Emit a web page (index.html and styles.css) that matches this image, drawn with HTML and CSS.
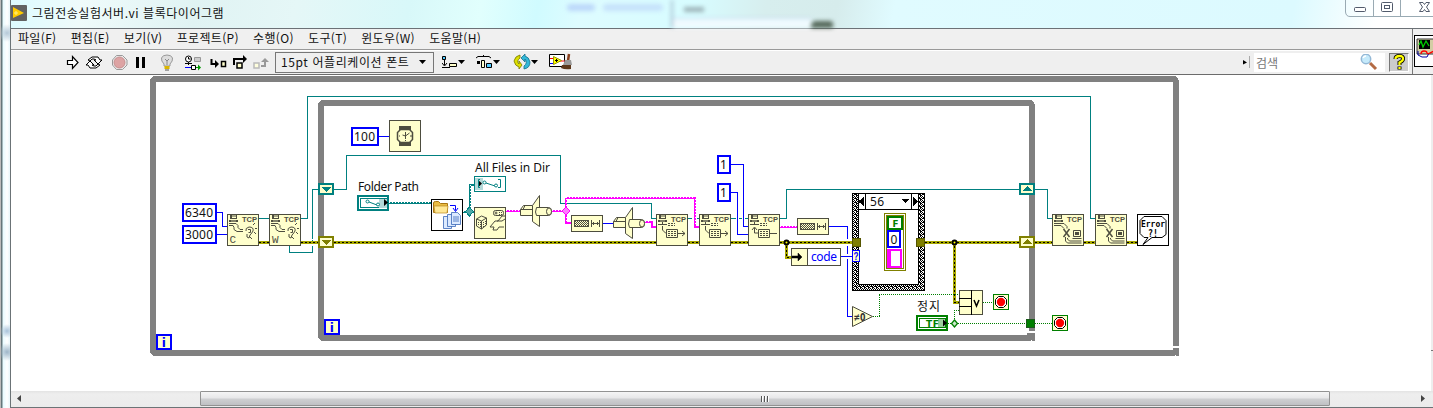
FILE: index.html
```html
<!DOCTYPE html>
<html lang="ko">
<head>
<meta charset="utf-8">
<title>그림전송실험서버.vi 블록다이어그램</title>
<link rel="stylesheet" href="styles.css">
</head>
<body>
<div class="window">
  <div class="frame-left"></div>
  <div class="main">
    <header class="titlebar">
      <svg class="app-icon" width="16" height="16" viewBox="0 0 16 16"><rect width="16" height="16" rx="1" fill="#626262"/><path d="M2 2L13 8L2 13Z" fill="#fc0"/><path d="M5 6v4M3 8h4" stroke="#fff080"/></svg>
      <h1 class="title">그림전송실험서버.vi 블록다이어그램</h1>
      <div class="ghost"><i class="smudge"></i><i class="smudge wide"></i><div class="ghost-panel"><i class="ghost-text"></i><i class="ghost-field"></i></div><i class="ghost-dot"></i></div>
      <div class="controls">
        <svg width="88" height="17" viewBox="1345 0 88 17"><path d="M1345.500 0V12Q1346 16.500 1350 16.500H1433M1373.500 0V16M1400.500 0V16" fill="none" stroke="#99aab3"/><g fill="#fff" stroke="#525b6c"><rect x="1354.500" y="7.500" width="11" height="4" rx="1"/><rect x="1381.500" y="2.500" width="11" height="9" rx="1"/><rect x="1384.500" y="5.500" width="5" height="3"/><path d="M1419.500 2.500h3.500l1.500 2 1.500-2h3.500l-3 4.500 3 4.500h-3.500l-1.500-2-1.500 2h-3.500l3-4.500z"/></g></svg>
      </div>
    </header>
    <div class="bars">
      <div class="bars-main">
        <nav class="menubar"><span>파일(F)</span><span>편집(E)</span><span>보기(V)</span><span>프로젝트(P)</span><span>수행(O)</span><span>도구(T)</span><span>윈도우(W)</span><span>도움말(H)</span></nav>
        <div class="toolbar">
          <div class="run-tools">
            <svg width="16" height="23" viewBox="65 51 16 23"><path d="M67.500 60.500h5v-4l5.500 6-5.500 6v-4h-5z" fill="#fff" stroke="#000" stroke-width="1.200"/></svg>
            <svg width="18" height="23" viewBox="85 51 18 23"><path d="M88 60l4-3h6l2 3h2l-4 4-4-4h2l-2-1h-2l-2 2zM100 65l-4 3h-6l-2-3h-2l4-4 4 4h-2l2 1h2l2-2z" fill="#fff" stroke="#000"/></svg>
            <svg width="18" height="23" viewBox="111 51 18 23"><path d="M116.500 55.500h6l4.500 4.500v5l-4.500 4.500h-6l-4-4.500v-5z" fill="#eee" stroke="#999"/><circle cx="119.500" cy="62.500" r="5.500" fill="#dda3a3" stroke="#c48e8e"/></svg>
            <svg width="14" height="23" viewBox="134 51 14 23"><path d="M136 57h3v11h-3zM142 57h3v11h-3z"/></svg>
            <svg width="16" height="23" viewBox="159 51 16 23"><path d="M164 64q-3-3-2.500-6 1-3 5.500-3t5.500 3q.5 3-2.500 6v2h-6z" fill="#ddd" stroke="#999"/><path d="M165 59l2 2 2-2M167 61v4" fill="none" stroke="#888"/><path d="M164.500 66h5v3h-5z" fill="#dbb600"/><path d="M165 70h4" stroke="#555"/></svg>
            <svg width="20" height="23" viewBox="183 51 20 23"><circle cx="188.500" cy="59" r="3" fill="#fff" stroke="#000"/><path d="M188.500 57v2h2M188.500 62v3M185 63.500h7" fill="none" stroke="#000"/><path d="M194.500 57.500h6v4h-6z" fill="#ccc" stroke="#999"/><path d="M185 67.500h6" stroke="#00f"/><path d="M191.500 65.500h4v4h-4z" fill="#fff" stroke="#000"/><path d="M196 67.500h2" stroke="#090"/><path d="M198 64.500l3 3-3 3z" fill="#090"/></svg>
            <svg width="20" height="23" viewBox="209 51 20 23"><path d="M211.500 59v5h5" fill="none" stroke="#000" stroke-width="2"/><path d="M215 60l4 4-4 4z"/><path d="M221.500 61.500h4v5h-4z" fill="#ffc" stroke="#000" stroke-width="1.500"/></svg>
            <svg width="18" height="23" viewBox="231 51 18 23"><path d="M234 65v-6h9" fill="none" stroke="#000" stroke-width="2"/><path d="M243 55l4 4-4 4z"/><path d="M237 63h5v5h-5z" fill="#ffc" stroke="#000" stroke-width="1.500"/></svg>
            <svg width="18" height="23" viewBox="252 51 18 23"><path d="M254 63h5v5h-5z" fill="#ffd" stroke="#bbb" stroke-width="1.500"/><path d="M261 66h4v-5" fill="none" stroke="#999" stroke-width="2"/><path d="M261 62l4-4 4 4z" fill="#999"/></svg>
          </div>
          <div class="font-combo"><span>15pt 어플리케이션 폰트</span><svg width="7" height="5" viewBox="0 0 7 5"><path d="M0 0h7L3.500 4z"/></svg></div>
          <div class="arrange-tools">
            <svg width="24" height="23" viewBox="442 51 24 23"><path d="M442.500 56.500h3v3h-3z" fill="#5cf" stroke="#000"/><path d="M444.500 60v5M442 63l2.500 3 2.500-3M442 67.500h8" fill="none" stroke="#000"/><path d="M449.500 63.500h7v3h-7z" fill="#ffc" stroke="#000"/><path d="M458 60h7l-3.500 4z"/></svg>
            <svg width="26" height="23" viewBox="476 51 26 23"><path d="M477 58l2-1.500h11l2 1.500M484.500 56v-1" fill="none" stroke="#000"/><path d="M478 61h3v3h-3z"/><path d="M482.500 60.500h3v7h-3z" fill="#ffc" stroke="#000"/><path d="M487.500 63.500h5v4h-5z" fill="#5cf" stroke="#000"/><path d="M494 60h7l-3.500 4z"/></svg>
            <svg width="28" height="23" viewBox="511 51 28 23"><path d="M521 55q-5 1-6 6 1 5 5 6v2l3-4-3-4v3q-3-3 1-6z" fill="#dde000" stroke="#777700" stroke-width=".8"/><path d="M525 69q6-1 6-7-1-5-5-6v-2l-4 4 4 4v-3q3 4-1 7z" fill="#32b8d8" stroke="#176e8b" stroke-width=".8"/><path d="M532 60h7l-3.500 4z"/></svg>
            <svg width="26" height="23" viewBox="547 51 26 23"><path d="M549.500 54.500h15v12h-15z" fill="#fff" stroke="#000"/><path d="M550 58.500h4M560 61h5" stroke="red"/><path d="M550 63.500h4" stroke="#00f"/><path d="M553.500 56.500l8 4-8 4z" fill="#ff0" stroke="#990"/><path d="M556.500 59v3M555 60.500h3" stroke="#000"/><path d="M569 54l-1 7" stroke="#873e1c" stroke-width="2.500"/><path d="M565 60h6l1 5h-9z" fill="#999"/><path d="M562 65h9v4q-6 1-10-1z" fill="#5c381b"/></svg>
          </div>
          <div class="search-tools">
            <svg class="expander" width="8" height="13" viewBox="1243 56 8 13"><path d="M1243 60l4 2.500-4 2z"/><path d="M1249.500 56v12" stroke="#aaa"/></svg>
            <div class="search"><span>검색</span><svg width="18" height="17" viewBox="1360 54 18 17"><path d="M1370 63l6 6" stroke="#b36b45" stroke-width="3"/><circle cx="1366" cy="59" r="4.700" fill="#c5eafb" stroke="#94b8d6" stroke-width="1.500"/><path d="M1363 58q1-2 3-2" fill="none" stroke="#fff" stroke-width="1.500"/></svg></div>
            <div class="help"><svg width="18" height="17" viewBox="0 0 18 17"><path d="M5.500 5q0-3 4-3t3.500 3q0 2-3.500 3.500V11M9.500 12.500v3" fill="none" stroke="#000" stroke-width="4"/><path d="M5.500 5q0-3 4-3t3.500 3q0 2-3.500 3.500V11M9.500 13v2" fill="none" stroke="#ff0" stroke-width="2.300"/></svg></div>
          </div>
        </div>
      </div>
      <div class="vi-icon"><svg width="20" height="33" viewBox="0 0 20 33"><rect x=".5" y=".5" width="32" height="31" fill="#fff" stroke="#000"/><path d="M3 4h17v15H3z" fill="#d3cda5" stroke="#333"/><path d="M5 5h11v9H5z"/><path d="M5 10l2-4 2 6 3-6 3 5" fill="none" stroke="#0c0" stroke-width="1.300"/><path d="M4 16v4l4 2h5l2-4" fill="none" stroke="#00a"/><path d="M7 19q0-3 3-3t3 2 7-2" fill="none" stroke="red" stroke-width="1.300"/></svg></div>
    </div>
    <div class="workspace">
      <svg class="diagram" width="1420" height="316" viewBox="11 75 1420 316">
        <defs>
          <pattern id="checker" width="4" height="4" patternUnits="userSpaceOnUse"><rect width="4" height="4" fill="#fff"/><path d="M0 0h1v1h-1zM2 0h1v1h-1zM1 1h1v1h-1zM3 1h1v1h-1zM0 2h1v1h-1zM2 2h2v1h-2zM0 3h2v1h-2z"/></pattern>
          <pattern id="weave" width="2" height="2" patternUnits="userSpaceOnUse"><rect width="2" height="2" fill="#ffc"/><path d="M0 0h1v1h-1zM1 1h1v1h-1z" fill="#4d4d3f"/></pattern>
          <g id="base"><rect x=".5" y=".5" width="31" height="31" fill="#ffc" stroke="#4d4d3f"/></g>
          <g id="tcp"><use href="#base"/><path d="M3 1h2v3h4V1h1v4h-7zM5 1.500h4v1h-4zM2 6h9v2h-9z" fill="#4d4d3f"/><path d="M4 7h5" stroke="#ffc" stroke-width=".6"/><text class="tiny" x="15" y="7.500" textLength="15" lengthAdjust="spacingAndGlyphs">TCP</text></g>
          <g id="listen"><use href="#tcp"/><path d="M2 9.500h7l2 2v2l2 2h3M2 11.500h4l1 2v2l3 2h6M19 17q-1-3 3-4 5 0 4 4-1 2-3 4l-1 3-2-1v-3M21 15.500h2.500v3h-2M26 11l2-2M28 14.500h2M27 18l2 2M23 23l2 2" fill="none" stroke="#4d4d3f"/></g>
          <g id="send"><use href="#tcp"/><path d="M6.500 8v2M2 10.500h9M6.500 12v4l3 3h1M22 19.500h7M26 17l3 2.500-3 2.500" fill="none" stroke="#4d4d3f"/><path d="M12 9.500h7M12 11.500h7" stroke="#4d4d3f" stroke-dasharray="2 1"/><path d="M10.500 15.500h11v8h-11z" fill="#ffc" stroke="#4d4d3f"/><path d="M12 17.500h8M12 19.500h8M12 21.500h8" stroke="#4d4d3f" stroke-dasharray="2 1"/></g>
          <g id="recv"><use href="#tcp"/><path d="M6.500 8v2M2 10.500h9M6.500 14v5h4M4 16l2.500-3 2.500 3M22 19.500h7" fill="none" stroke="#4d4d3f"/><path d="M12 9.500h7M12 11.500h7" stroke="#4d4d3f" stroke-dasharray="2 1"/><path d="M10.500 15.500h11v8h-11z" fill="#ffc" stroke="#4d4d3f"/><path d="M12 17.500h8M12 19.500h8M12 21.500h8" stroke="#4d4d3f" stroke-dasharray="2 1"/></g>
          <g id="close"><use href="#tcp"/><path d="M2 9.500h10l3 3v2M2 11.500h7l3 3M13.500 23v4l2 2h14M15.500 24v1l2 2h12M21.500 16.500h7v6h-7zM20.500 24.500h9" fill="none" stroke="#4d4d3f"/><path d="M23 18h4v3h-4z" fill="#4d4d3f"/><path d="M11.500 15l6 8M17.500 15l-6 8" stroke="#4d4d3f" stroke-width="1.500"/></g>
          <g id="length"><rect x=".5" y=".5" width="31" height="16" fill="#ffc" stroke="#4d4d3f"/><rect x="3.500" y="5.500" width="14" height="6" fill="url(#weave)" stroke="#4d4d3f"/><path d="M20.500 5v7M28.500 5v7M21 8.500h7M22.500 7v3M26.500 7v3" stroke="#4d4d3f" fill="none"/></g>
          <g id="concat" fill="#ffc" stroke="#4d4d3f"><path d="M.5 14.500l3-4h9v10H.5z"/><path d="M.5 14.500h12M5 10.500l-2 4"/><path d="M12.500 10.500L19.500.5v31l-7-5z"/><path d="M16.500 12.500h12q3 0 3 4t-3 4h-12q-2-3 0-8z"/><ellipse cx="29" cy="16.500" rx="2.500" ry="3.500"/></g>
          <g id="iter"><rect x="1" y="1" width="14" height="14" fill="#ffc" stroke="#00f" stroke-width="2"/><text class="iter-i" x="5.800" y="13">i</text></g>
          <g id="stop"><rect x=".5" y=".5" width="15" height="15" fill="#ffc" stroke="#007f00"/><path d="M5.500 2.500h5l3 3v5l-3 3h-5l-3-3v-5z" fill="#fff" stroke="#000"/><circle cx="8" cy="8" r="4.200" fill="red"/></g>
        </defs>

        <g class="crisp">
          <path d="M150 81l1-3 3-2H1175l3 2 1 3V346h-6V82H156V350H1173v-2h6v8h-3v-1h-1v1H154l-3-2-1-3z" fill="gray"/>
          <path d="M318 105l1-3 3-2H1031l3 2 1 3V331h-6V106H324V335H1027v-2h8v8h-3v-1h-1v1H322l-3-2-1-3z" fill="gray"/>
        </g>

        <g class="wire teal">
          <path d="M259 218.500h10M301 218.500h6.500V96.500H1090.500V218.500h4.500M289.500 245v7.500h23V189.500h6M334 189.500h12.500V155.500h214v48h91v15h5M688 218.500h4M697 218.500h2M731 218.500h5M739 218.500h3M745 218.500h3M780 218.500h6.500v-29H1019M1035 189.500h12.500v29h4.500"/>
        </g>
        <g class="crisp"><path d="M309 239h7v1h-7zM309 244h7v2h-7z" fill="#fff"/></g>
        <g class="wire blue">
          <path d="M217 212.500h5.500v14h4.500M217 234.500h10M379 136.500h10M603 223.500h10M731 164.500h12.500v62h4.500M731 192.500h6.500v42h10.500M829 226.500h18.500V239M847.500 246v8M847.500 259v57.500h5M841 256.500h12"/>
        </g>
        <g class="path-wire">
          <path d="M389 203h42M463 212h11M470 212V184M469 185h5"/>
          <path class="path-gap" d="M389 202.500h42M463 211.500h5M470.500 207V184"/>
          <path class="path-joint" d="M469.500 207l4 4.500-4 4.500-4-4.500z"/>
        </g>
        <g class="string-wire">
          <path d="M506 211h14M552 211h14M566 198h129v29h4M566 198v25h5M645 222h7v5h4M780 227h17"/>
          <path class="string-gap" d="M506 210.500h14M552 210.500h14M566 197.500h128M695.500 199v26M566.500 199v23M645 221.500h5M780 226.500h17"/>
          <path class="string-joint" d="M566 207l4 4-4 4-4-4z"/>
        </g>
        <g class="error-wire"><path id="error-path" d="M259 242.500h10M301 242.500h17M334 242.500h322M688 242.500h11M731 242.500h17M780 242.500h72M786.500 242v15.500h5M906 242.500h10M925 242.500h94M954.500 242v60.500h5M1035 242.500h17M1084 242.500h11M1127 242.500h10"/></g>
        <use class="error-dash" href="#error-path"/>
        <g fill="#ff0" stroke="#000" stroke-width="2"><circle cx="786.500" cy="242.500" r="2"/><circle cx="954.500" cy="242.500" r="2"/></g>
        <g class="bool-wire"><path d="M873 316.500h6.500M879.500 316v-22M879 294.500H959M948 323.500h78M954.500 323v-13M954 310.500h5M983 302.500h10M1035 323.500h17"/></g>
        <path d="M954.500 320l3 3.500-3 3.500-3-3.500z" fill="#cfe8cf" stroke="#007f00" stroke-width="1.300"/>

        <g class="crisp" fill="#fff" stroke="#00f" stroke-width="2"><rect x="183" y="204" width="33" height="17"/><rect x="183" y="226" width="33" height="17"/><rect x="352" y="128" width="26" height="17"/><rect x="718" y="156" width="12" height="17"/><rect x="718" y="184" width="12" height="17"/></g>
        <g class="label"><text x="185" y="217" textLength="28">6340</text><text x="185" y="239" textLength="28">3000</text><text x="354" y="141" textLength="21">100</text><text x="720" y="169">1</text><text x="720" y="197">1</text><text x="358" y="191" textLength="61">Folder Path</text><text x="475" y="172" textLength="75">All Files in Dir</text><text x="917" y="311" textLength="23">정지</text></g>

        <g class="crisp">
          <g fill="#ffc" stroke-width="2"><g stroke="#008080"><rect x="319" y="184" width="14" height="10"/><rect x="1020" y="184" width="14" height="10"/></g><g stroke="#808000"><rect x="319" y="237" width="14" height="10"/><rect x="1020" y="237" width="14" height="10"/></g></g>
          <path d="M321 187h10l-5 5zM1022 191h10l-5-5z" fill="#008080"/><path d="M321 240h10l-5 5zM1022 244h10l-5-5z" fill="#808000"/>
        </g>

        <use href="#listen" x="227" y="214"/><use href="#listen" x="269" y="214"/><text class="tiny big" x="229.500" y="243">C</text><text class="tiny big" x="272" y="243">W</text>
        <use href="#send" x="656" y="214"/><use href="#send" x="699" y="214"/><use href="#recv" x="748" y="214"/>
        <use href="#close" x="1052" y="214"/><use href="#close" x="1095" y="214"/>
        <use href="#length" x="571" y="215"/><use href="#length" x="797" y="218"/>
        <use href="#concat" x="520" y="195"/><use href="#concat" x="613" y="207"/>

        <use href="#base" x="389" y="120"/>
        <path d="M399 126h12v4h-12zM399 142h12v4h-12z" fill="#4d4d3f"/><path d="M400.500 129.500h9l3 3v7l-3 3h-9l-3-3v-7z" fill="#ffc" stroke="#4d4d3f" stroke-width="1.500"/><path d="M405.500 132v7M405.500 136l4-3M405.500 136l-3-1M399 136h1M410 136h3M405.500 140v1" stroke="#4d4d3f" fill="none"/>

        <g class="crisp" fill="#fff" stroke="#008080"><rect x="358" y="196" width="30" height="14" stroke-width="2"/><rect x="360.500" y="198.500" width="26" height="9"/><rect x="474.500" y="176.500" width="31" height="15"/></g>
        <path d="M379 199h8v9h-8zM475 178h8v12h-8z" fill="#b4d9d9"/><path d="M384 199l4 3.500-4 3.500zM478 180l4 3.500-4 4z"/>
        <g fill="#fff" stroke="#008080"><path d="M369 202l8 3M486 183l9 3M480 179.500h-1.500v8h1.500M498 179.500h2.500v8h-2.500" fill="none"/><circle cx="367.500" cy="201.500" r="1.500"/><circle cx="378" cy="204.500" r="1.500"/><circle cx="484.500" cy="182.500" r="1.500"/><circle cx="496" cy="185.500" r="1.500"/></g>

        <rect x="431.500" y="199.500" width="31" height="31" fill="#fff" stroke="#000"/>
        <path d="M433.500 203q0-1.500 2-1.500h3l2 2h7v9h-14z" fill="#e9bb42" stroke="#a87512"/><path d="M434 206h14l-1 7h-12z" fill="#ffe895" stroke="#b9861c" stroke-width=".7"/>
        <path d="M450 205.500h5.500v5M453 208l2.500 3.500 2.500-3.500" fill="none" stroke="#00f"/>
        <g fill="#dceaff" stroke="#3867b8" stroke-width=".8"><path d="M443.500 216.500h8v12h-8z"/><path d="M447.500 214.500h8v12h-8z"/><path d="M451.500 212.500h6l3 3v9h-9z"/><path d="M453 217h6M453 219h6M453 221h6"/></g>

        <use href="#base" x="474" y="207"/>
        <g fill="none" stroke="#4d4d3f"><rect x="493.500" y="210.500" width="10" height="5" rx="2"/><circle cx="496" cy="213" r="1"/><path d="M499 212.500h4M499 214.500h4" stroke-dasharray="1 1"/><path d="M476.500 219l5-3 5 2v7l-5 4-5-3zM476.500 219l5 2 5-3M481.500 221v8M505 216h-3l-4 5h-3l-5 6h4l-1 3h4l2-3h5M497 221l5 0 3-2"/><path d="M483.500 222v5M485.500 221v5M478.500 222v4M480.500 222v5" stroke-dasharray="1 1"/></g>

        <g class="crisp"><rect x="791.500" y="248.500" width="49" height="17" fill="#fff" stroke="#4d4d3f"/><path d="M792 249h15v16h-15z" fill="#ffc"/><path d="M807.500 248v18" stroke="#4d4d3f"/></g><path d="M792 256h6v-3l4 4-4 4v-3h-6z" stroke="#000" stroke-width=".5"/><text class="label code" x="811" y="261" textLength="26">code</text>

        <g class="crisp"><rect x="852.500" y="193.500" width="72" height="97" fill="url(#checker)" stroke="#000"/><rect x="858.500" y="193.500" width="60" height="91" fill="#fff" stroke="#000"/><path d="M858 209.500h61M865.500 194v15M911.500 194v15M852 193.500h73" stroke="#000"/><path d="M864 197v9l-6-4.500zM913 197v9l5-4.500zM901 199h8l-4 4z"/></g>
        <text class="label" x="870" y="206" textLength="14">56</text>
        <g class="crisp" fill="#fff"><rect x="884.500" y="213.500" width="21" height="57" stroke="#808000"/><rect x="886.500" y="215.500" width="17" height="53" stroke="#808000"/><rect x="888" y="217" width="14" height="12" stroke="#007f00" stroke-width="2"/><rect x="888" y="231" width="12" height="16" stroke="#00f" stroke-width="2"/><path d="M887 249h15v19h-15z" fill="#f0f"/><path d="M891 251h9v15h-9z"/></g>
        <text class="green-glyph" x="892.500" y="226.500" textLength="6" lengthAdjust="spacingAndGlyphs">F</text><text class="label" x="890.500" y="244">0</text>
        <g class="crisp" fill="#808000" stroke="#555500"><rect x="852.500" y="238.500" width="8" height="8"/><rect x="916.500" y="238.500" width="8" height="8"/></g>
        <rect class="crisp" x="852.500" y="250.500" width="7" height="11" fill="#ffc" stroke="#00f"/><text class="question" x="853.500" y="260" textLength="5" lengthAdjust="spacingAndGlyphs">?</text>
        <path d="M852.500 306.500v20l20-10z" fill="#ffc" stroke="#4d4d3f"/><text class="not-zero" x="853.500" y="320.500" textLength="12" lengthAdjust="spacingAndGlyphs">≠0</text>

        <g class="crisp" fill="#fff" stroke="#007f00"><rect x="917" y="316" width="30" height="14" stroke-width="2"/><rect x="919.500" y="318.500" width="26" height="9"/></g><path d="M938 319h7v8h-7z" fill="#9cce9c"/><text class="green-glyph" x="926" y="326.500" textLength="13">TF</text><path d="M943 319.500l4 3.500-4 3.500z"/>
        <g class="crisp" fill="#ffc" stroke="#4d4d3f"><rect x="959.500" y="290.500" width="23" height="24"/><path d="M971.500 290v25M959 298.500h12M959 306.500h12" stroke="#000"/></g><path d="M974 300l2.500 6 2.500-6" fill="none" stroke="#000" stroke-width="1.500"/>
        <use href="#stop" x="993" y="294"/><use href="#stop" x="1052" y="315"/>
        <rect class="crisp" x="1026.500" y="319.500" width="8" height="8" fill="#008000" stroke="#1b5a1b"/>
        <use href="#iter" x="156" y="334"/><use href="#iter" x="324" y="319"/>

        <rect x="1137.500" y="214.500" width="31" height="31" fill="#fff" stroke="#000"/><path d="M1144 216.500h18l4 4v14l-4 3h-10l-9 7 5-7h-4l-4-4v-13z" fill="#fff" stroke="#000"/><text class="error-text" x="1141" y="227" textLength="24" lengthAdjust="spacingAndGlyphs">Error</text><text class="error-text marks" x="1148" y="236.500" textLength="10" lengthAdjust="spacingAndGlyphs">?!</text>
      </svg>
      <div class="vscroll"></div>
    </div>
    <div class="hscroll">
      <svg width="17" height="16" viewBox="0 0 17 16"><path d="M10 4v7L6 7.500z" fill="#444"/></svg>
      <div class="thumb"><i></i><i></i><i></i></div>
      <svg width="17" height="16" viewBox="0 0 17 16"><path d="M6 4v7l4-3.500z" fill="#444"/></svg>
    </div>
  </div>
</div>
</body>
</html>
```
FILE: styles.css
```css
* { box-sizing: border-box; }
body { margin: 0; overflow: hidden; font: 12px/16px "Noto Sans CJK KR", "Noto Sans", sans-serif; color: #111; }
svg { display: block; flex: none; }
.window { display: flex; width: 1433px; height: 408px; background: #f0f0f0; }
.frame-left { width: 11px; flex: none; border-left: 1px solid #bbb; border-right: 1px solid #6b7376; background: radial-gradient(circle at 6px 33px, #b5c9d8 0, #b5c9d800 9px), radial-gradient(circle at 6px 331px, #a9c3da 0, #a9c3da00 7px), radial-gradient(circle at 6px 352px, #9eb6c9 0, #9eb6c900 9px), linear-gradient(90deg, #66777b 0, #66777b 1px, #e7fbff 2px, #fff 6px, #e1f4f9 10px); }
.main { display: flex; flex-direction: column; width: 1422px; }
.titlebar { display: flex; align-items: flex-start; height: 29px; flex: none; border-bottom: 1px solid #6c7176; background: linear-gradient(100deg, #dcfbff 0, #effbfb 5%, #e0f3f3 13%, #e5f7f7 20%, #d8f8f9 28%, #e1fffd 33%, #d0fbff 37%, #defcff 40%, #d7fcff 48%, #d7eeee 53%, #d6ecec 58%, #e0fbff 62%, #dcfaff 90%, #fff 96%); }
.app-icon { margin-top: 5px; }
.title { width: 195px; margin: 5px 0 0 5px; font: 12px/16px "Noto Sans CJK KR", sans-serif; letter-spacing: .54px; white-space: nowrap; }
.ghost { display: flex; width: 420px; margin-left: 340px; align-items: flex-end; height: 28px; overflow: hidden; filter: blur(2px); }
.smudge { width: 28px; height: 7px; margin: 0 8px 17px 0; border-radius: 6px; background: #bcd8fa; }
.smudge.wide { width: 60px; background: #c6e2fb; }
.ghost-panel { display: flex; flex-direction: column; justify-content: space-between; width: 140px; height: 28px; border-left: 2px solid #a7bdcf; }
.ghost-text { width: 20px; height: 5px; margin: 7px 0 0 11px; background: #9db3b8; }
.ghost-field { height: 10px; border-top: 1px solid #bfd4ee; background: #f0fbff; }
.ghost-dot { width: 22px; height: 7px; border-radius: 5px 3px 0 0; background: #55685a; }
.controls { margin-left: auto; }
.bars { display: flex; height: 46px; flex: none; border-bottom: 1px solid #6b6b6b; }
.bars-main { width: 1401px; }
.menubar { display: flex; gap: 14.2px; height: 21px; padding: 1px 0 0 7px; border-bottom: 1px solid #999; white-space: nowrap; }
.menubar span { letter-spacing: .33px; }
.toolbar { display: flex; height: 24px; align-items: center; border-top: 1px solid #fff; background: #efefef; }
.run-tools, .arrange-tools, .search-tools { display: flex; align-items: center; }
.run-tools { width: 264px; padding-left: 54px; }
.run-tools svg:nth-child(2) { margin-left: 4px; }
.run-tools svg:nth-child(3) { margin-left: 8px; }
.run-tools svg:nth-child(4) { margin-left: 5px; }
.run-tools svg:nth-child(5) { margin-left: 11px; }
.run-tools svg:nth-child(6) { margin-left: 8px; }
.run-tools svg:nth-child(7) { margin-left: 6px; }
.run-tools svg:nth-child(8) { margin-left: 2px; }
.run-tools svg:nth-child(9) { margin-left: 3px; }
.font-combo { display: flex; align-items: center; justify-content: space-between; width: 159px; height: 21px; padding: 0 7px 0 5px; border: 1px solid #777; letter-spacing: .6px; white-space: nowrap; }
.font-combo span { padding-bottom: 1px; }
.arrange-tools { margin-left: 8px; gap: 9px; }
.search-tools { margin-left: auto; padding-right: 3px; }
.expander { margin-right: 3px; }
.search { display: flex; align-items: center; justify-content: space-between; width: 131px; height: 19px; padding: 0 7px 0 2px; margin-right: 4px; background: #fff; color: #777; }
.help { width: 20px; height: 19px; border: 1px solid #777; border-right-color: #fff; border-bottom-color: #fff; background: #ccc; }
.vi-icon { width: 21px; padding: 6px 0 0 1px; border-left: 1px solid #777; overflow: hidden; }
.workspace { display: flex; height: 316px; flex: none; background: #fff; }
.vscroll { width: 2px; height: 316px; background: linear-gradient(#eee 0, #eee 275px, #777 275px, #777 276px, #eee 276px); }
.hscroll { display: flex; height: 17px; flex: none; border-bottom: 1px solid #6c7376; background: linear-gradient(#e3e3e3 0, #eee 3px, #ebebeb); }
.thumb { display: flex; gap: 1px; justify-content: center; align-items: center; width: 1130px; height: 15px; margin-left: 172px; margin-right: 85px; border: 1px solid #929292; border-radius: 1px; background: linear-gradient(#f5f5f5 0, #e6e6e8 48%, #cfd0d2 52%, #bfc0c4); }
.thumb i { width: 2px; height: 6px; border-left: 1px solid #555; background: #fff; }
.crisp, .wire, .path-wire, .string-wire, .error-wire, .error-dash, .bool-wire { shape-rendering: crispEdges; }
.wire, .path-wire, .string-wire, .bool-wire { fill: none; }
.teal { stroke: #008080; }
.blue { stroke: #00f; }
.path-wire { stroke: #008080; stroke-width: 2; }
.path-gap { stroke: #fff; stroke-width: 1; stroke-dasharray: 1 2; }
.path-joint { stroke-width: 1; fill: #4fa8a8; }
.string-wire { stroke: #f0f; stroke-width: 2; }
.string-gap { stroke: #fff; stroke-width: 1; stroke-dasharray: 1 2; }
.string-joint { stroke-width: 1; fill: #ff7cff; }
#error-path { fill: none; }
.error-wire { stroke: #a8a800; stroke-width: 3; }
.error-dash { stroke: #000; stroke-width: 1; stroke-dasharray: 2 2; }
.bool-wire { stroke: #007f00; stroke-dasharray: 1 1; }
.label { font: 12px "Noto Sans", "Noto Sans CJK KR", sans-serif; fill: #111; }
.code { fill: #00f; }
.tiny { font: bold 7.5px "Liberation Sans", sans-serif; fill: #4d4d3f; }
.big { font: 11px "Liberation Mono", monospace; }
.iter-i { font: bold 12px "DejaVu Sans", sans-serif; fill: #00f; }
.green-glyph { font: bold 9px "DejaVu Sans", sans-serif; fill: #007f00; }
.question { font: bold 10px "Liberation Sans", sans-serif; fill: #00f; }
.not-zero { font: bold 11px "DejaVu Sans", sans-serif; fill: #333; }
.error-text { font: bold 8px "DejaVu Sans Mono", monospace; }
.marks { font-size: 11px; }
```
